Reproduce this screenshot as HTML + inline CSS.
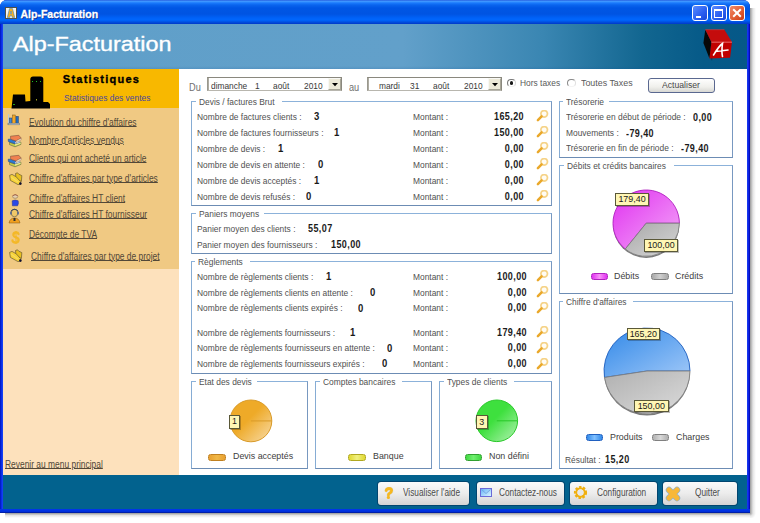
<!DOCTYPE html><html><head><meta charset="utf-8"><style>
*{margin:0;padding:0}
html,body{width:760px;height:523px;overflow:hidden;background:#fff;position:relative}
.a{position:absolute}
.t{position:absolute;white-space:nowrap;line-height:1;font-family:"Liberation Sans",sans-serif}
</style></head><body>
<div class="a" style="left:750px;top:8px;width:6px;height:505px;background:linear-gradient(to right,rgba(0,0,0,.4),rgba(0,0,0,.1) 50%,rgba(0,0,0,0));"></div>
<div class="a" style="left:5px;top:513px;width:745px;height:5px;background:linear-gradient(to bottom,rgba(0,0,0,.4),rgba(0,0,0,.1) 50%,rgba(0,0,0,0));"></div>
<div class="a" style="left:750px;top:513px;width:6px;height:5px;background:radial-gradient(circle at 0 0,rgba(0,0,0,.4),rgba(0,0,0,.1) 3px,rgba(0,0,0,0) 6px);"></div>
<div class="a" style="left:0px;top:0px;width:750px;height:513px;background:#0831d9;border-radius:7px 7px 0 0;box-shadow:inset -1px -1px 0 #001ea0, inset 1px 0 0 #0040e0;"></div>
<div class="a" style="left:3px;top:24px;width:744px;height:485px;background:#fff;"></div>
<div class="a" style="left:0px;top:0px;width:750px;height:24px;border-radius:7px 7px 0 0;background:linear-gradient(to bottom,#2a62e0 0px,#3d95ff 1.5px,#1a7afc 3px,#0a64ee 5px,#0056e4 8px,#0054e2 14px,#0062f8 18px,#0066fc 20px,#0050e0 22px,#0038c8 24px);"></div>
<div class="a" style="left:0px;top:24px;width:3px;height:489px;background:linear-gradient(to right,#0014b8,#0a2ee8 50%,#1848f8);"></div>
<div class="a" style="left:747px;top:24px;width:3px;height:489px;background:linear-gradient(to right,#1a3cf4,#0a1ee0 60%,#0000a0);"></div>
<div class="a" style="left:0px;top:509px;width:750px;height:4px;background:linear-gradient(to bottom,#0038e8,#0030e0 60%,#001890);"></div>
<div class="a" style="left:5.2px;top:6.8px;width:12px;height:12px;background:#f8f4ec;border:1px solid #50504a;box-sizing:border-box"></div>
<svg class="a" style="left:5.2px;top:6.8px" width="12" height="12" viewBox="0 0 12 12"><path d="M2.3,10.6 L4.5,1.6 L7.5,1.6 L9.7,10.6 L7.3,10.6 L6.9,8.7 L5.1,8.7 L4.7,10.6 Z M5.4,6.9 L6.6,6.9 L6,4 Z" fill="#f8b020" fill-rule="evenodd" stroke="#3a80c0" stroke-width=".6"/></svg>
<div class="t" style="left:20.50px;top:8.81px;font-size:10.5px;color:#fff;font-weight:bold;text-shadow:1px 1px 0 #0a2a90;-webkit-text-stroke:0.3px #fff;">Alp-Facturation</div>
<div class="a" style="left:691.5px;top:5px;width:16px;height:16px;border:1px solid #fff;border-radius:3px;box-sizing:border-box;background:linear-gradient(135deg,#5a8cff,#2a5ef0 60%,#1a48d8)"></div>
<div class="a" style="left:710.5px;top:5px;width:16px;height:16px;border:1px solid #fff;border-radius:3px;box-sizing:border-box;background:linear-gradient(135deg,#5a8cff,#2a5ef0 60%,#1a48d8)"></div>
<div class="a" style="left:729px;top:5px;width:16px;height:16px;border:1px solid #fff;border-radius:3px;box-sizing:border-box;background:linear-gradient(135deg,#f08a6a,#e05a30 60%,#c83c18)"></div>
<div class="a" style="left:695.5px;top:15.5px;width:5.5px;height:2.1999999999999993px;background:#fff;"></div>
<div class="a" style="left:713.7px;top:9.2px;width:9.3px;height:8.8px;border:1px solid #fff;border-top-width:2px;box-sizing:border-box"></div>
<svg class="a" style="left:729px;top:5px" width="16" height="16"><path d="M4.2 4.2 L11.8 11.8 M11.8 4.2 L4.2 11.8" stroke="#fff" stroke-width="2"/></svg>
<div class="a" style="left:3px;top:24px;width:744px;height:45px;background:linear-gradient(to right,#5f9fc9 0px,#62a0ca 400px,#3a86b2 540px,#126690 640px,#065a88 700px,#055888 747px);"></div>
<div class="a" style="left:3px;top:66px;width:744px;height:3px;background:linear-gradient(to bottom,rgba(0,60,140,0),rgba(0,60,140,.12));"></div>
<div class="t" style="left:13.30px;transform:scaleX(1.135);transform-origin:0 0;top:33.86px;font-size:20.6px;color:#fff;-webkit-text-stroke:0.35px #fff;">Alp-Facturation</div>
<svg class="a" style="left:700px;top:26px" width="40" height="38" viewBox="700 26 40 38">
<polygon points="706.5,31 712.3,43.5 710.5,59.5 705,45" fill="#000" transform="translate(1.5,1.5)" opacity=".35"/>
<polygon points="705.3,29.7 711.4,42 709.5,58.4 703.4,43.1" fill="#080808"/>
<polygon points="705.3,29.7 724.4,29.7 732,42 711.4,42" fill="#c40c0c"/>
<polygon points="711.4,42 732,42 730.1,57.7 709.5,58.4" fill="#c00000"/>
<path d="M705.3,29.7 L724.4,29.7" fill="none" stroke="#e04040" stroke-width=".6"/><path d="M711.4,42.2 L732,42.2" stroke="#f08080" stroke-width=".8"/>
<path d="M713.5,55 C716,51 719,46 722.5,43.5 C722,47 721.5,52 722.5,56.5 M715.5,51.5 L728,50" stroke="#fff" stroke-width="1.6" fill="none" stroke-linecap="round"/>
</svg>
<div class="a" style="left:3px;top:69px;width:176px;height:39px;background:#f8b800;"></div>
<div class="a" style="left:3px;top:108px;width:176px;height:161px;background:#f0c983;"></div>
<div class="a" style="left:3px;top:269px;width:176px;height:206px;background:#fde1bc;"></div>
<svg class="a" style="left:10px;top:75px" width="42" height="34" viewBox="10 75 42 34">
<path d="M13,94.5 L25,94.5 L25.5,101.5 L30.3,101 L30.3,79 Q30.5,76.4 33,76.4 L40.5,76.4 Q43.3,76.4 43.3,79 L43.3,102 L48,102 L50,104 L50,108.5 L11.5,108.5 Z" fill="#000"/>
<rect x="32" y="81" width="1" height="1" fill="#20c020"/><rect x="36" y="81" width="1" height="1" fill="#20c020"/><rect x="40" y="81" width="1" height="1" fill="#20c020"/>
<rect x="13" y="104" width="2" height="1" fill="#20a020"/><rect x="36" y="99" width="1" height="1.5" fill="#a0a020"/>
</svg>
<div class="t" style="left:62.80px;top:74.49px;font-size:11px;color:#000;font-weight:bold;letter-spacing:1.25px;-webkit-text-stroke:0.35px #000;">Statistiques</div>
<div class="t" style="left:64.00px;transform:scaleX(0.933);transform-origin:0 0;top:93.88px;font-size:9.0px;color:#4a46a0;">Statistiques des ventes</div>
<div class="t" style="left:29.10px;transform:scaleX(0.842);transform-origin:0 0;top:118.23px;font-size:10.0px;color:#524838;text-decoration:underline;text-underline-offset:0.3px;">Evolution du chiffre d&#x27;affaires</div>
<div class="t" style="left:29.10px;transform:scaleX(0.842);transform-origin:0 0;top:135.53px;font-size:10.0px;color:#524838;text-decoration:underline;text-underline-offset:0.3px;">Nombre d&#x27;articles vendus</div>
<div class="t" style="left:29.10px;transform:scaleX(0.842);transform-origin:0 0;top:154.03px;font-size:10.0px;color:#524838;text-decoration:underline;text-underline-offset:0.3px;">Clients qui ont acheté un article</div>
<div class="t" style="left:29.10px;transform:scaleX(0.842);transform-origin:0 0;top:174.03px;font-size:10.0px;color:#524838;text-decoration:underline;text-underline-offset:0.3px;">Chiffre d&#x27;affaires par type d&#x27;articles</div>
<div class="t" style="left:29.10px;transform:scaleX(0.842);transform-origin:0 0;top:194.03px;font-size:10.0px;color:#524838;text-decoration:underline;text-underline-offset:0.3px;">Chiffre d&#x27;affaires HT client</div>
<div class="t" style="left:29.10px;transform:scaleX(0.842);transform-origin:0 0;top:209.73px;font-size:10.0px;color:#524838;text-decoration:underline;text-underline-offset:0.3px;">Chiffre d&#x27;affaires HT fournisseur</div>
<div class="t" style="left:29.10px;transform:scaleX(0.842);transform-origin:0 0;top:229.63px;font-size:10.0px;color:#524838;text-decoration:underline;text-underline-offset:0.3px;">Décompte de TVA</div>
<div class="t" style="left:30.80px;transform:scaleX(0.842);transform-origin:0 0;top:252.03px;font-size:10.0px;color:#524838;text-decoration:underline;text-underline-offset:0.3px;">Chiffre d&#x27;affaires par type de projet</div>
<div class="t" style="left:5.30px;transform:scaleX(0.842);transform-origin:0 0;top:460.34px;font-size:10.0px;color:#524838;text-decoration:underline;text-underline-offset:0.3px;">Revenir au menu principal</div>
<svg class="a" style="left:6px;top:112px" width="16" height="15" viewBox="6 112 16 15">
<rect x="8" y="114.2" width="1.2" height="10" fill="#b8c8d8"/>
<rect x="9.4" y="118" width="2.4" height="5.4" fill="#3a88d8" stroke="#283868" stroke-width=".5"/>
<rect x="12.7" y="115" width="2.5" height="8.4" fill="#f8a820" stroke="#705018" stroke-width=".5"/>
<rect x="16" y="116.4" width="2.4" height="7" fill="#2070c0" stroke="#283868" stroke-width=".5"/>
<rect x="8" y="123.2" width="11.6" height="1.6" fill="#eef6fa" stroke="#485058" stroke-width=".5"/>
</svg>
<svg class="a" style="left:6px;top:132px" width="18" height="17" viewBox="6 132 18 17">
<polygon points="9.5,142.3 15,144 20.9,142.2 20.9,144.4 15,146.8 9.5,144.6" fill="#c8d048" stroke="#586848" stroke-width=".6"/>
<polygon points="15,144.2 20.6,142.4 20.6,143.8 15,145.8" fill="#f0e890"/>
<polygon points="8.2,139.2 10.7,139.3 16,141 16.2,142.5 15,143.8 8.4,141.6" fill="#2a7ad8" stroke="#284880" stroke-width=".6"/>
<polygon points="15,142 19.8,140.8 19.8,142.4 15,143.8" fill="#e0ecff" stroke="#5070a0" stroke-width=".4"/>
<polygon points="10.5,136.2 18.8,135.3 21.2,138.2 16,141 10.7,139.3" fill="#f08050" stroke="#785040" stroke-width=".6"/>
<polygon points="16,141 21.2,138.2 21.2,139.9 16.2,142.6" fill="#f8e4c8" stroke="#906850" stroke-width=".4"/>
</svg>
<svg class="a" style="left:6px;top:152.3px" width="18" height="17" viewBox="6 132 18 17">
<polygon points="9.5,142.3 15,144 20.9,142.2 20.9,144.4 15,146.8 9.5,144.6" fill="#c8d048" stroke="#586848" stroke-width=".6"/>
<polygon points="15,144.2 20.6,142.4 20.6,143.8 15,145.8" fill="#f0e890"/>
<polygon points="8.2,139.2 10.7,139.3 16,141 16.2,142.5 15,143.8 8.4,141.6" fill="#2a7ad8" stroke="#284880" stroke-width=".6"/>
<polygon points="15,142 19.8,140.8 19.8,142.4 15,143.8" fill="#e0ecff" stroke="#5070a0" stroke-width=".4"/>
<polygon points="10.5,136.2 18.8,135.3 21.2,138.2 16,141 10.7,139.3" fill="#f08050" stroke="#785040" stroke-width=".6"/>
<polygon points="16,141 21.2,138.2 21.2,139.9 16.2,142.6" fill="#f8e4c8" stroke="#906850" stroke-width=".4"/>
</svg>
<svg class="a" style="left:8.6px;top:172.3px" width="14" height="14" viewBox="0 0 14 14">
<path d="M6.5,1.5 L8.5,0.8 L9.8,2.2 L12.8,3.6 L12.4,9.5 L7,6.5 Z" fill="#e8c020" stroke="#6a5a30" stroke-width=".7"/>
<path d="M0.6,3.4 L3,2.4 L7.2,4.8 L11.6,9.6 L11,12.2 L9,12.6 L1.4,8.4 Z" fill="#f6d238" stroke="#6a5a30" stroke-width=".7"/>
<path d="M2,5 L9,10" stroke="#f8e070" stroke-width="1.2" opacity=".7"/>
<circle cx="11.4" cy="11.6" r="1.3" fill="#101030"/>
</svg>
<svg class="a" style="left:8.6px;top:249.3px" width="14" height="14" viewBox="0 0 14 14">
<path d="M6.5,1.5 L8.5,0.8 L9.8,2.2 L12.8,3.6 L12.4,9.5 L7,6.5 Z" fill="#e8c020" stroke="#6a5a30" stroke-width=".7"/>
<path d="M0.6,3.4 L3,2.4 L7.2,4.8 L11.6,9.6 L11,12.2 L9,12.6 L1.4,8.4 Z" fill="#f6d238" stroke="#6a5a30" stroke-width=".7"/>
<path d="M2,5 L9,10" stroke="#f8e070" stroke-width="1.2" opacity=".7"/>
<circle cx="11.4" cy="11.6" r="1.3" fill="#101030"/>
</svg>
<svg class="a" style="left:10px;top:193px" width="10" height="14" viewBox="0 0 10 14">
<ellipse cx="5.2" cy="3.6" rx="2.6" ry="1.7" fill="#e8d0b0" stroke="#706050" stroke-width=".5"/>
<path d="M2.4,3 Q5.2,0.8 8,3 L7.6,2.2 Q5.2,0.6 2.8,2.2 Z" fill="#902828"/>
<path d="M2.4,12.8 L2.2,7.8 Q5.2,6.2 8.2,7.8 L8.4,10.5 L7.6,12.8 Z" fill="#2a48e8" stroke="#202890" stroke-width=".5"/>
</svg>
<svg class="a" style="left:8px;top:208px" width="13" height="16" viewBox="0 0 13 16">
<ellipse cx="6.5" cy="5" rx="3.3" ry="3.8" fill="#f0c868" stroke="#505040" stroke-width=".6"/>
<path d="M3,3.5 Q6.5,0 10,3.5 L10,2.5 Q6.5,-1 3,2.5 Z" fill="#304060"/>
<rect x="2.3" y="3.5" width="1.2" height="3" fill="#3050a0"/><rect x="9.5" y="3.5" width="1.2" height="3" fill="#3050a0"/>
<path d="M1,15 Q2,10 6.5,10 Q11,10 12,15 Z" fill="#f0a020" stroke="#805010" stroke-width=".5"/>
<rect x="5.5" y="10" width="2" height="3" fill="#303030"/>
</svg>
<svg class="a" style="left:9.5px;top:229.5px" width="12" height="15" viewBox="0 0 12 15">
<path d="M8.5,4 Q8,2.2 5.5,2.5 Q3,3 3.5,5.5 Q4,7 6.5,7.5 Q9,8.5 8.5,10.5 Q8,12.8 5,12.5 Q2.5,12 2.5,10.5" fill="none" stroke="#f4b828" stroke-width="2.3" stroke-linecap="round"/>
<path d="M6,1 L6,14" stroke="#f4b828" stroke-width="1.1"/>
</svg>
<div class="t" style="left:189.00px;transform:scaleX(0.92);transform-origin:0 0;top:82.73px;font-size:10px;color:#707070;">Du</div>
<div class="a" style="left:207px;top:77px;width:135px;height:14px;background:#fff;border:1px solid;border-color:#8a887e #8a887e #b8b6ae #9a988e;box-sizing:border-box;box-shadow:inset 1px 0 0 #aeaca2;"></div>
<div class="a" style="left:328px;top:78px;width:13px;height:12px;background:#ece9d8;border:1px solid;border-color:#f8f8f4 #a8a698 #a8a698 #f8f8f4;box-sizing:border-box;"></div>
<svg class="a" style="left:331.5px;top:83px" width="6" height="3.5"><path d="M0,0 L6,0 L3,3.2 Z" fill="#000"/></svg>
<div class="t" style="left:210.80px;transform:scaleX(0.87);transform-origin:0 0;top:81.27px;font-size:9.6px;color:#383838;">dimanche</div>
<div class="t" style="left:254.50px;transform:scaleX(0.87);transform-origin:0 0;top:81.27px;font-size:9.6px;color:#383838;">1</div>
<div class="t" style="left:273.00px;transform:scaleX(0.87);transform-origin:0 0;top:81.27px;font-size:9.6px;color:#383838;">août</div>
<div class="t" style="left:303.80px;transform:scaleX(0.87);transform-origin:0 0;top:81.27px;font-size:9.6px;color:#383838;">2010</div>
<div class="t" style="left:349.00px;transform:scaleX(0.92);transform-origin:0 0;top:82.73px;font-size:10px;color:#707070;">au</div>
<div class="a" style="left:367px;top:77px;width:135px;height:14px;background:#fff;border:1px solid;border-color:#8a887e #8a887e #b8b6ae #9a988e;box-sizing:border-box;box-shadow:inset 1px 0 0 #aeaca2;"></div>
<div class="a" style="left:488px;top:78px;width:13px;height:12px;background:#ece9d8;border:1px solid;border-color:#f8f8f4 #a8a698 #a8a698 #f8f8f4;box-sizing:border-box;"></div>
<svg class="a" style="left:491.5px;top:83px" width="6" height="3.5"><path d="M0,0 L6,0 L3,3.2 Z" fill="#000"/></svg>
<div class="t" style="left:378.60px;transform:scaleX(0.87);transform-origin:0 0;top:81.27px;font-size:9.6px;color:#383838;">mardi</div>
<div class="t" style="left:410.00px;transform:scaleX(0.87);transform-origin:0 0;top:81.27px;font-size:9.6px;color:#383838;">31</div>
<div class="t" style="left:433.00px;transform:scaleX(0.87);transform-origin:0 0;top:81.27px;font-size:9.6px;color:#383838;">août</div>
<div class="t" style="left:463.70px;transform:scaleX(0.87);transform-origin:0 0;top:81.27px;font-size:9.6px;color:#383838;">2010</div>
<div class="a" style="left:507px;top:78.8px;width:8.6px;height:8.6px;border-radius:50%;border:1px solid;border-color:#7a7a7a #d8d8d8 #f0f0f0 #7a7a7a;box-sizing:border-box;background:#fff"></div>
<div class="a" style="left:509.6px;top:81.4px;width:3.4px;height:3.4px;border-radius:50%;background:#181818"></div>
<div class="a" style="left:567px;top:78.8px;width:8.6px;height:8.6px;border-radius:50%;border:1px solid;border-color:#8a8a8a #e0e0e0 #f4f4f4 #8a8a8a;box-sizing:border-box;background:#fff"></div>
<div class="t" style="left:520.30px;transform:scaleX(0.933);transform-origin:0 0;top:79.08px;font-size:9.0px;color:#5a5a5a;">Hors taxes</div>
<div class="t" style="left:581.00px;transform:scaleX(0.985);transform-origin:0 0;top:79.08px;font-size:9.0px;color:#5a5a5a;">Toutes Taxes</div>
<div class="a" style="left:648px;top:78px;width:67px;height:15px;border:1px solid #5a6890;border-radius:3px;box-sizing:border-box;background:linear-gradient(#fefefe,#f0f0ec 60%,#d8d8d4)"></div>
<div class="t" style="left:662.00px;transform:scaleX(0.9);transform-origin:0 0;top:80.47px;font-size:9.6px;color:#484848;">Actualiser</div>
<div class="a" style="left:191px;top:101px;width:361px;height:105px;border:1px solid;border-color:#8cb2da #7898c0 #6c8cb4 #86acd4;box-sizing:border-box;"></div>
<div class="a" style="left:195.7px;top:101px;width:86.30000000000001px;height:1px;background:#fff;"></div>
<div class="t" style="left:198.70px;transform:scaleX(0.933);transform-origin:0 0;top:98.28px;font-size:9.0px;color:#505050;">Devis / factures Brut</div>
<div class="t" style="left:197.40px;transform:scaleX(0.933);transform-origin:0 0;top:112.68px;font-size:9.0px;color:#505050;">Nombre de factures clients :</div>
<div class="t" style="left:314.00px;transform:scaleX(0.95);transform-origin:0 0;top:111.83px;font-size:10.0px;color:#1a1a1a;font-weight:bold;letter-spacing:0.2px;">3</div>
<div class="t" style="left:413.00px;transform:scaleX(0.933);transform-origin:0 0;top:112.68px;font-size:9.0px;color:#505050;">Montant :</div>
<div class="t" style="left:324.40px;width:200px;text-align:right;transform:scaleX(0.9);transform-origin:100% 0;top:111.63px;font-size:10.0px;color:#1a1a1a;font-weight:bold;letter-spacing:0.45px;">165,20</div>
<svg class="a" style="left:535.5px;top:110.3px" width="13" height="12" viewBox="0 0 13 12">
<circle cx="8.2" cy="3.8" r="3.3" fill="#fffcf4" stroke="#f8dc9c" stroke-width="1.8"/>
<circle cx="8.2" cy="3.8" r="3.3" fill="none" stroke="#f0c060" stroke-width=".6" opacity=".7"/>
<path d="M5.6,6.4 L1.9,10.1" stroke="#eaa82a" stroke-width="2.5" stroke-linecap="round"/>
</svg>
<div class="t" style="left:197.40px;transform:scaleX(0.933);transform-origin:0 0;top:128.68px;font-size:9.0px;color:#505050;">Nombre de factures fournisseurs :</div>
<div class="t" style="left:334.00px;transform:scaleX(0.95);transform-origin:0 0;top:127.84px;font-size:10.0px;color:#1a1a1a;font-weight:bold;letter-spacing:0.2px;">1</div>
<div class="t" style="left:413.00px;transform:scaleX(0.933);transform-origin:0 0;top:128.68px;font-size:9.0px;color:#505050;">Montant :</div>
<div class="t" style="left:324.40px;width:200px;text-align:right;transform:scaleX(0.9);transform-origin:100% 0;top:127.64px;font-size:10.0px;color:#1a1a1a;font-weight:bold;letter-spacing:0.45px;">150,00</div>
<svg class="a" style="left:535.5px;top:126.30000000000001px" width="13" height="12" viewBox="0 0 13 12">
<circle cx="8.2" cy="3.8" r="3.3" fill="#fffcf4" stroke="#f8dc9c" stroke-width="1.8"/>
<circle cx="8.2" cy="3.8" r="3.3" fill="none" stroke="#f0c060" stroke-width=".6" opacity=".7"/>
<path d="M5.6,6.4 L1.9,10.1" stroke="#eaa82a" stroke-width="2.5" stroke-linecap="round"/>
</svg>
<div class="t" style="left:197.40px;transform:scaleX(0.933);transform-origin:0 0;top:144.68px;font-size:9.0px;color:#505050;">Nombre de devis :</div>
<div class="t" style="left:278.00px;transform:scaleX(0.95);transform-origin:0 0;top:143.84px;font-size:10.0px;color:#1a1a1a;font-weight:bold;letter-spacing:0.2px;">1</div>
<div class="t" style="left:413.00px;transform:scaleX(0.933);transform-origin:0 0;top:144.68px;font-size:9.0px;color:#505050;">Montant :</div>
<div class="t" style="left:324.40px;width:200px;text-align:right;transform:scaleX(0.9);transform-origin:100% 0;top:143.64px;font-size:10.0px;color:#1a1a1a;font-weight:bold;letter-spacing:0.45px;">0,00</div>
<svg class="a" style="left:535.5px;top:142.3px" width="13" height="12" viewBox="0 0 13 12">
<circle cx="8.2" cy="3.8" r="3.3" fill="#fffcf4" stroke="#f8dc9c" stroke-width="1.8"/>
<circle cx="8.2" cy="3.8" r="3.3" fill="none" stroke="#f0c060" stroke-width=".6" opacity=".7"/>
<path d="M5.6,6.4 L1.9,10.1" stroke="#eaa82a" stroke-width="2.5" stroke-linecap="round"/>
</svg>
<div class="t" style="left:197.40px;transform:scaleX(0.933);transform-origin:0 0;top:160.68px;font-size:9.0px;color:#505050;">Nombre de devis en attente :</div>
<div class="t" style="left:318.00px;transform:scaleX(0.95);transform-origin:0 0;top:159.84px;font-size:10.0px;color:#1a1a1a;font-weight:bold;letter-spacing:0.2px;">0</div>
<div class="t" style="left:413.00px;transform:scaleX(0.933);transform-origin:0 0;top:160.68px;font-size:9.0px;color:#505050;">Montant :</div>
<div class="t" style="left:324.40px;width:200px;text-align:right;transform:scaleX(0.9);transform-origin:100% 0;top:159.64px;font-size:10.0px;color:#1a1a1a;font-weight:bold;letter-spacing:0.45px;">0,00</div>
<svg class="a" style="left:535.5px;top:158.3px" width="13" height="12" viewBox="0 0 13 12">
<circle cx="8.2" cy="3.8" r="3.3" fill="#fffcf4" stroke="#f8dc9c" stroke-width="1.8"/>
<circle cx="8.2" cy="3.8" r="3.3" fill="none" stroke="#f0c060" stroke-width=".6" opacity=".7"/>
<path d="M5.6,6.4 L1.9,10.1" stroke="#eaa82a" stroke-width="2.5" stroke-linecap="round"/>
</svg>
<div class="t" style="left:197.40px;transform:scaleX(0.933);transform-origin:0 0;top:176.68px;font-size:9.0px;color:#505050;">Nombre de devis acceptés :</div>
<div class="t" style="left:314.00px;transform:scaleX(0.95);transform-origin:0 0;top:175.84px;font-size:10.0px;color:#1a1a1a;font-weight:bold;letter-spacing:0.2px;">1</div>
<div class="t" style="left:413.00px;transform:scaleX(0.933);transform-origin:0 0;top:176.68px;font-size:9.0px;color:#505050;">Montant :</div>
<div class="t" style="left:324.40px;width:200px;text-align:right;transform:scaleX(0.9);transform-origin:100% 0;top:175.64px;font-size:10.0px;color:#1a1a1a;font-weight:bold;letter-spacing:0.45px;">0,00</div>
<svg class="a" style="left:535.5px;top:174.3px" width="13" height="12" viewBox="0 0 13 12">
<circle cx="8.2" cy="3.8" r="3.3" fill="#fffcf4" stroke="#f8dc9c" stroke-width="1.8"/>
<circle cx="8.2" cy="3.8" r="3.3" fill="none" stroke="#f0c060" stroke-width=".6" opacity=".7"/>
<path d="M5.6,6.4 L1.9,10.1" stroke="#eaa82a" stroke-width="2.5" stroke-linecap="round"/>
</svg>
<div class="t" style="left:197.40px;transform:scaleX(0.933);transform-origin:0 0;top:192.68px;font-size:9.0px;color:#505050;">Nombre de devis refusés :</div>
<div class="t" style="left:306.40px;transform:scaleX(0.95);transform-origin:0 0;top:191.84px;font-size:10.0px;color:#1a1a1a;font-weight:bold;letter-spacing:0.2px;">0</div>
<div class="t" style="left:413.00px;transform:scaleX(0.933);transform-origin:0 0;top:192.68px;font-size:9.0px;color:#505050;">Montant :</div>
<div class="t" style="left:324.40px;width:200px;text-align:right;transform:scaleX(0.9);transform-origin:100% 0;top:191.64px;font-size:10.0px;color:#1a1a1a;font-weight:bold;letter-spacing:0.45px;">0,00</div>
<svg class="a" style="left:535.5px;top:190.3px" width="13" height="12" viewBox="0 0 13 12">
<circle cx="8.2" cy="3.8" r="3.3" fill="#fffcf4" stroke="#f8dc9c" stroke-width="1.8"/>
<circle cx="8.2" cy="3.8" r="3.3" fill="none" stroke="#f0c060" stroke-width=".6" opacity=".7"/>
<path d="M5.6,6.4 L1.9,10.1" stroke="#eaa82a" stroke-width="2.5" stroke-linecap="round"/>
</svg>
<div class="a" style="left:191px;top:213px;width:361px;height:41px;border:1px solid;border-color:#8cb2da #7898c0 #6c8cb4 #86acd4;box-sizing:border-box;"></div>
<div class="a" style="left:195.7px;top:213px;width:68.30000000000001px;height:1px;background:#fff;"></div>
<div class="t" style="left:198.70px;transform:scaleX(0.933);transform-origin:0 0;top:210.28px;font-size:9.0px;color:#505050;">Paniers moyens</div>
<div class="t" style="left:197.40px;transform:scaleX(0.933);transform-origin:0 0;top:224.88px;font-size:9.0px;color:#505050;">Panier moyen des clients :</div>
<div class="t" style="left:307.50px;transform:scaleX(0.9);transform-origin:0 0;top:224.34px;font-size:10.0px;color:#1a1a1a;font-weight:bold;letter-spacing:0.45px;">55,07</div>
<div class="t" style="left:197.40px;transform:scaleX(0.933);transform-origin:0 0;top:240.88px;font-size:9.0px;color:#505050;">Panier moyen des fournisseurs :</div>
<div class="t" style="left:331.00px;transform:scaleX(0.9);transform-origin:0 0;top:240.34px;font-size:10.0px;color:#1a1a1a;font-weight:bold;letter-spacing:0.45px;">150,00</div>
<div class="a" style="left:191px;top:261px;width:361px;height:113px;border:1px solid;border-color:#8cb2da #7898c0 #6c8cb4 #86acd4;box-sizing:border-box;"></div>
<div class="a" style="left:195.3px;top:261px;width:54.39999999999998px;height:1px;background:#fff;"></div>
<div class="t" style="left:198.30px;transform:scaleX(0.933);transform-origin:0 0;top:258.28px;font-size:9.0px;color:#505050;">Règlements</div>
<div class="t" style="left:197.40px;transform:scaleX(0.933);transform-origin:0 0;top:272.78px;font-size:9.0px;color:#505050;">Nombre de règlements clients :</div>
<div class="t" style="left:326.00px;transform:scaleX(0.95);transform-origin:0 0;top:271.94px;font-size:10.0px;color:#1a1a1a;font-weight:bold;letter-spacing:0.2px;">1</div>
<div class="t" style="left:413.00px;transform:scaleX(0.933);transform-origin:0 0;top:272.78px;font-size:9.0px;color:#505050;">Montant :</div>
<div class="t" style="left:326.70px;width:200px;text-align:right;transform:scaleX(0.9);transform-origin:100% 0;top:271.74px;font-size:10.0px;color:#1a1a1a;font-weight:bold;letter-spacing:0.45px;">100,00</div>
<svg class="a" style="left:535.5px;top:270.4px" width="13" height="12" viewBox="0 0 13 12">
<circle cx="8.2" cy="3.8" r="3.3" fill="#fffcf4" stroke="#f8dc9c" stroke-width="1.8"/>
<circle cx="8.2" cy="3.8" r="3.3" fill="none" stroke="#f0c060" stroke-width=".6" opacity=".7"/>
<path d="M5.6,6.4 L1.9,10.1" stroke="#eaa82a" stroke-width="2.5" stroke-linecap="round"/>
</svg>
<div class="t" style="left:197.40px;transform:scaleX(0.933);transform-origin:0 0;top:288.58px;font-size:9.0px;color:#505050;">Nombre de règlements clients en attente :</div>
<div class="t" style="left:369.70px;transform:scaleX(0.95);transform-origin:0 0;top:287.74px;font-size:10.0px;color:#1a1a1a;font-weight:bold;letter-spacing:0.2px;">0</div>
<div class="t" style="left:413.00px;transform:scaleX(0.933);transform-origin:0 0;top:288.58px;font-size:9.0px;color:#505050;">Montant :</div>
<div class="t" style="left:326.70px;width:200px;text-align:right;transform:scaleX(0.9);transform-origin:100% 0;top:287.54px;font-size:10.0px;color:#1a1a1a;font-weight:bold;letter-spacing:0.45px;">0,00</div>
<svg class="a" style="left:535.5px;top:286.2px" width="13" height="12" viewBox="0 0 13 12">
<circle cx="8.2" cy="3.8" r="3.3" fill="#fffcf4" stroke="#f8dc9c" stroke-width="1.8"/>
<circle cx="8.2" cy="3.8" r="3.3" fill="none" stroke="#f0c060" stroke-width=".6" opacity=".7"/>
<path d="M5.6,6.4 L1.9,10.1" stroke="#eaa82a" stroke-width="2.5" stroke-linecap="round"/>
</svg>
<div class="t" style="left:197.40px;transform:scaleX(0.933);transform-origin:0 0;top:304.38px;font-size:9.0px;color:#505050;">Nombre de règlements clients expirés :</div>
<div class="t" style="left:358.00px;transform:scaleX(0.95);transform-origin:0 0;top:303.54px;font-size:10.0px;color:#1a1a1a;font-weight:bold;letter-spacing:0.2px;">0</div>
<div class="t" style="left:413.00px;transform:scaleX(0.933);transform-origin:0 0;top:304.38px;font-size:9.0px;color:#505050;">Montant :</div>
<div class="t" style="left:326.70px;width:200px;text-align:right;transform:scaleX(0.9);transform-origin:100% 0;top:303.34px;font-size:10.0px;color:#1a1a1a;font-weight:bold;letter-spacing:0.45px;">0,00</div>
<svg class="a" style="left:535.5px;top:302px" width="13" height="12" viewBox="0 0 13 12">
<circle cx="8.2" cy="3.8" r="3.3" fill="#fffcf4" stroke="#f8dc9c" stroke-width="1.8"/>
<circle cx="8.2" cy="3.8" r="3.3" fill="none" stroke="#f0c060" stroke-width=".6" opacity=".7"/>
<path d="M5.6,6.4 L1.9,10.1" stroke="#eaa82a" stroke-width="2.5" stroke-linecap="round"/>
</svg>
<div class="t" style="left:197.40px;transform:scaleX(0.933);transform-origin:0 0;top:328.58px;font-size:9.0px;color:#505050;">Nombre de règlements fournisseurs :</div>
<div class="t" style="left:350.00px;transform:scaleX(0.95);transform-origin:0 0;top:327.74px;font-size:10.0px;color:#1a1a1a;font-weight:bold;letter-spacing:0.2px;">1</div>
<div class="t" style="left:413.00px;transform:scaleX(0.933);transform-origin:0 0;top:328.58px;font-size:9.0px;color:#505050;">Montant :</div>
<div class="t" style="left:326.70px;width:200px;text-align:right;transform:scaleX(0.9);transform-origin:100% 0;top:327.54px;font-size:10.0px;color:#1a1a1a;font-weight:bold;letter-spacing:0.45px;">179,40</div>
<svg class="a" style="left:535.5px;top:326.2px" width="13" height="12" viewBox="0 0 13 12">
<circle cx="8.2" cy="3.8" r="3.3" fill="#fffcf4" stroke="#f8dc9c" stroke-width="1.8"/>
<circle cx="8.2" cy="3.8" r="3.3" fill="none" stroke="#f0c060" stroke-width=".6" opacity=".7"/>
<path d="M5.6,6.4 L1.9,10.1" stroke="#eaa82a" stroke-width="2.5" stroke-linecap="round"/>
</svg>
<div class="t" style="left:197.40px;transform:scaleX(0.933);transform-origin:0 0;top:344.38px;font-size:9.0px;color:#505050;">Nombre de règlements fournisseurs en attente :</div>
<div class="t" style="left:387.00px;transform:scaleX(0.95);transform-origin:0 0;top:343.54px;font-size:10.0px;color:#1a1a1a;font-weight:bold;letter-spacing:0.2px;">0</div>
<div class="t" style="left:413.00px;transform:scaleX(0.933);transform-origin:0 0;top:344.38px;font-size:9.0px;color:#505050;">Montant :</div>
<div class="t" style="left:326.70px;width:200px;text-align:right;transform:scaleX(0.9);transform-origin:100% 0;top:343.34px;font-size:10.0px;color:#1a1a1a;font-weight:bold;letter-spacing:0.45px;">0,00</div>
<svg class="a" style="left:535.5px;top:342px" width="13" height="12" viewBox="0 0 13 12">
<circle cx="8.2" cy="3.8" r="3.3" fill="#fffcf4" stroke="#f8dc9c" stroke-width="1.8"/>
<circle cx="8.2" cy="3.8" r="3.3" fill="none" stroke="#f0c060" stroke-width=".6" opacity=".7"/>
<path d="M5.6,6.4 L1.9,10.1" stroke="#eaa82a" stroke-width="2.5" stroke-linecap="round"/>
</svg>
<div class="t" style="left:197.40px;transform:scaleX(0.933);transform-origin:0 0;top:360.18px;font-size:9.0px;color:#505050;">Nombre de règlements fournisseurs expirés :</div>
<div class="t" style="left:381.70px;transform:scaleX(0.95);transform-origin:0 0;top:359.34px;font-size:10.0px;color:#1a1a1a;font-weight:bold;letter-spacing:0.2px;">0</div>
<div class="t" style="left:413.00px;transform:scaleX(0.933);transform-origin:0 0;top:360.18px;font-size:9.0px;color:#505050;">Montant :</div>
<div class="t" style="left:326.70px;width:200px;text-align:right;transform:scaleX(0.9);transform-origin:100% 0;top:359.14px;font-size:10.0px;color:#1a1a1a;font-weight:bold;letter-spacing:0.45px;">0,00</div>
<svg class="a" style="left:535.5px;top:357.8px" width="13" height="12" viewBox="0 0 13 12">
<circle cx="8.2" cy="3.8" r="3.3" fill="#fffcf4" stroke="#f8dc9c" stroke-width="1.8"/>
<circle cx="8.2" cy="3.8" r="3.3" fill="none" stroke="#f0c060" stroke-width=".6" opacity=".7"/>
<path d="M5.6,6.4 L1.9,10.1" stroke="#eaa82a" stroke-width="2.5" stroke-linecap="round"/>
</svg>
<div class="a" style="left:191px;top:381px;width:117px;height:88px;border:1px solid;border-color:#8cb2da #7898c0 #6c8cb4 #86acd4;box-sizing:border-box;"></div>
<div class="a" style="left:195.7px;top:381px;width:61.30000000000001px;height:1px;background:#fff;"></div>
<div class="t" style="left:198.70px;transform:scaleX(0.933);transform-origin:0 0;top:378.28px;font-size:9.0px;color:#505050;">Etat des devis</div>
<div class="a" style="left:315px;top:381px;width:117px;height:88px;border:1px solid;border-color:#8cb2da #7898c0 #6c8cb4 #86acd4;box-sizing:border-box;"></div>
<div class="a" style="left:319.7px;top:381px;width:82.69999999999999px;height:1px;background:#fff;"></div>
<div class="t" style="left:322.70px;transform:scaleX(0.933);transform-origin:0 0;top:378.28px;font-size:9.0px;color:#505050;">Comptes bancaires</div>
<div class="a" style="left:439px;top:381px;width:113px;height:88px;border:1px solid;border-color:#8cb2da #7898c0 #6c8cb4 #86acd4;box-sizing:border-box;"></div>
<div class="a" style="left:444px;top:381px;width:70px;height:1px;background:#fff;"></div>
<div class="t" style="left:447.00px;transform:scaleX(0.933);transform-origin:0 0;top:378.28px;font-size:9.0px;color:#505050;">Types de clients</div>
<svg class="a" style="left:227.5px;top:398.1px" width="45.8" height="45.8" viewBox="227.5 398.1 45.8 45.8">
<defs><linearGradient id="gp1" x1="0" y1="0" x2="1" y2="1"><stop offset="0" stop-color="#eeaa28"/><stop offset=".45" stop-color="#eeaa28"/><stop offset="1" stop-color="#f8dcaa"/></linearGradient></defs>
<circle cx="250.4" cy="421" r="20.9" fill="url(#gp1)" stroke="#d89a28" stroke-width="1"/>
<line x1="250.4" y1="421" x2="271.3" y2="421" stroke="#d89a28" stroke-width="1"/>
</svg>
<div class="a" style="left:229.2px;top:415px;width:11.0px;height:13.600000000000023px;background:#fff6b4;border:1px solid #5a5838;box-sizing:border-box;box-shadow:1px 1px 0 rgba(0,0,0,.25)"></div>
<div class="t" style="left:229.2px;width:11.0px;text-align:center;top:416.36px;font-size:9.9px;color:#1a1a1a;transform:scaleX(0.9)">1</div>
<svg class="a" style="left:474.4px;top:398.09999999999997px" width="45.6" height="45.6" viewBox="474.4 398.09999999999997 45.6 45.6">
<defs><linearGradient id="gp2" x1="0" y1="0" x2="1" y2="1"><stop offset="0" stop-color="#3ee03e"/><stop offset=".45" stop-color="#3ee03e"/><stop offset="1" stop-color="#b4f2b4"/></linearGradient></defs>
<circle cx="497.2" cy="420.9" r="20.8" fill="url(#gp2)" stroke="#28c828" stroke-width="1"/>
<line x1="497.2" y1="420.9" x2="518.0" y2="420.9" stroke="#28c828" stroke-width="1"/>
</svg>
<div class="a" style="left:476.2px;top:415px;width:11.400000000000034px;height:14px;background:#fff6b4;border:1px solid #5a5838;box-sizing:border-box;box-shadow:1px 1px 0 rgba(0,0,0,.25)"></div>
<div class="t" style="left:476.2px;width:11.400000000000034px;text-align:center;top:416.56px;font-size:9.9px;color:#1a1a1a;transform:scaleX(0.9)">3</div>
<div class="a" style="left:208px;top:453.6px;width:17.5px;height:7.4px;border-radius:2.5px;border:1px solid #c08020;box-sizing:border-box;background:linear-gradient(to right,#e8a030,#f0b848 50%,#e8a030)"></div>
<div class="t" style="left:232.80px;transform:scaleX(0.905);transform-origin:0 0;top:451.30px;font-size:9.8px;color:#404040;">Devis acceptés</div>
<div class="a" style="left:348px;top:453.6px;width:17.5px;height:7.4px;border-radius:2.5px;border:1px solid #b0a820;box-sizing:border-box;background:linear-gradient(to right,#e0d830,#f0f080 50%,#e0d830)"></div>
<div class="t" style="left:372.70px;transform:scaleX(0.905);transform-origin:0 0;top:451.30px;font-size:9.8px;color:#404040;">Banque</div>
<div class="a" style="left:464.7px;top:453.6px;width:17.5px;height:7.4px;border-radius:2.5px;border:1px solid #30a030;box-sizing:border-box;background:linear-gradient(to right,#40d840,#70f070 50%,#40d840)"></div>
<div class="t" style="left:489.20px;transform:scaleX(0.905);transform-origin:0 0;top:451.30px;font-size:9.8px;color:#404040;">Non défini</div>
<div class="a" style="left:559px;top:101px;width:174px;height:57px;border:1px solid;border-color:#8cb2da #7898c0 #6c8cb4 #86acd4;box-sizing:border-box;"></div>
<div class="a" style="left:563.3px;top:101px;width:45.40000000000009px;height:1px;background:#fff;"></div>
<div class="t" style="left:566.30px;transform:scaleX(0.933);transform-origin:0 0;top:98.28px;font-size:9.0px;color:#505050;">Trésorerie</div>
<div class="t" style="left:565.60px;transform:scaleX(0.933);transform-origin:0 0;top:112.88px;font-size:9.0px;color:#505050;">Trésorerie en début de période :</div>
<div class="t" style="left:692.50px;transform:scaleX(0.9);transform-origin:0 0;top:112.83px;font-size:10.0px;color:#1a1a1a;font-weight:bold;letter-spacing:0.45px;">0,00</div>
<div class="t" style="left:565.60px;transform:scaleX(0.933);transform-origin:0 0;top:128.68px;font-size:9.0px;color:#505050;">Mouvements :</div>
<div class="t" style="left:626.20px;transform:scaleX(0.9);transform-origin:0 0;top:128.53px;font-size:10.0px;color:#1a1a1a;font-weight:bold;letter-spacing:0.45px;">-79,40</div>
<div class="t" style="left:565.60px;transform:scaleX(0.933);transform-origin:0 0;top:144.38px;font-size:9.0px;color:#505050;">Trésorerie en fin de période :</div>
<div class="t" style="left:681.20px;transform:scaleX(0.9);transform-origin:0 0;top:144.34px;font-size:10.0px;color:#1a1a1a;font-weight:bold;letter-spacing:0.45px;">-79,40</div>
<div class="a" style="left:559px;top:165px;width:174px;height:129px;border:1px solid;border-color:#8cb2da #7898c0 #6c8cb4 #86acd4;box-sizing:border-box;"></div>
<div class="a" style="left:564px;top:165px;width:109.70000000000005px;height:1px;background:#fff;"></div>
<div class="t" style="left:567.00px;transform:scaleX(0.933);transform-origin:0 0;top:162.28px;font-size:9.0px;color:#505050;">Débits et crédits bancaires</div>
<svg class="a" style="left:610.3px;top:186.89999999999998px" width="72.4" height="73.4" viewBox="610.3 186.89999999999998 72.4 73.4"><defs><linearGradient id="pd0" x1="0" y1="0" x2="1" y2="1"><stop offset="0" stop-color="#e030f0"/><stop offset=".5" stop-color="#e030f0" stop-opacity=".0" /><stop offset="1" stop-color="#f4a8f8"/></linearGradient><linearGradient id="pdb0" x1="0" y1="0" x2="1" y2="1"><stop offset="0" stop-color="#e030f0"/><stop offset="1" stop-color="#f4a8f8"/></linearGradient><linearGradient id="pd1" x1="0" y1="0" x2="1" y2="1"><stop offset="0" stop-color="#a8a8a8"/><stop offset=".5" stop-color="#a8a8a8" stop-opacity=".0" /><stop offset="1" stop-color="#d8d8d8"/></linearGradient><linearGradient id="pdb1" x1="0" y1="0" x2="1" y2="1"><stop offset="0" stop-color="#a8a8a8"/><stop offset="1" stop-color="#d8d8d8"/></linearGradient></defs><circle cx="646.5" cy="224.6" r="33.2" fill="#7a7a7a"/><path d="M646.5,223.1 L625.61,248.90 A33.2,33.2 0 1 1 679.70,223.10 Z" fill="url(#pdb0)" stroke="#b020c0" stroke-width=".9"/><path d="M646.5,223.1 L679.70,223.10 A33.2,33.2 0 0 1 625.61,248.90 Z" fill="url(#pdb1)" stroke="#808080" stroke-width=".9"/></svg>
<div class="a" style="left:615.4px;top:192.6px;width:34.0px;height:13.0px;background:#fff6b4;border:1px solid #5a5838;box-sizing:border-box;box-shadow:1px 1px 0 rgba(0,0,0,.25)"></div>
<div class="t" style="left:615.4px;width:34.0px;text-align:center;top:193.66px;font-size:9.9px;color:#1a1a1a;transform:scaleX(0.9)">179,40</div>
<div class="a" style="left:644px;top:239px;width:34px;height:13px;background:#fff6b4;border:1px solid #5a5838;box-sizing:border-box;box-shadow:1px 1px 0 rgba(0,0,0,.25)"></div>
<div class="t" style="left:644px;width:34px;text-align:center;top:240.06px;font-size:9.9px;color:#1a1a1a;transform:scaleX(0.9)">100,00</div>
<div class="a" style="left:590.6px;top:273.0px;width:17.5px;height:7.4px;border-radius:2.5px;border:1px solid #b020c0;box-sizing:border-box;background:linear-gradient(to right,#e030f0,#f890f8 50%,#e030f0)"></div>
<div class="t" style="left:614.40px;transform:scaleX(0.905);transform-origin:0 0;top:270.90px;font-size:9.8px;color:#404040;">Débits</div>
<div class="a" style="left:651.3px;top:273.0px;width:17.5px;height:7.4px;border-radius:2.5px;border:1px solid #808080;box-sizing:border-box;background:linear-gradient(to right,#a8a8a8,#d0d0d0 50%,#a8a8a8)"></div>
<div class="t" style="left:675.40px;transform:scaleX(0.905);transform-origin:0 0;top:270.90px;font-size:9.8px;color:#404040;">Crédits</div>
<div class="a" style="left:559px;top:301px;width:174px;height:168px;border:1px solid;border-color:#8cb2da #7898c0 #6c8cb4 #86acd4;box-sizing:border-box;"></div>
<div class="a" style="left:563.3px;top:301px;width:70.20000000000005px;height:1px;background:#fff;"></div>
<div class="t" style="left:566.30px;transform:scaleX(0.933);transform-origin:0 0;top:298.28px;font-size:9.0px;color:#505050;">Chiffre d&#x27;affaires</div>
<svg class="a" style="left:600.7px;top:325px" width="92" height="93" viewBox="600.7 325 92 93"><defs><linearGradient id="pc0" x1="0" y1="0" x2="1" y2="1"><stop offset="0" stop-color="#3088e8"/><stop offset=".5" stop-color="#3088e8" stop-opacity=".0" /><stop offset="1" stop-color="#a0c8f8"/></linearGradient><linearGradient id="pcb0" x1="0" y1="0" x2="1" y2="1"><stop offset="0" stop-color="#3088e8"/><stop offset="1" stop-color="#a0c8f8"/></linearGradient><linearGradient id="pc1" x1="0" y1="0" x2="1" y2="1"><stop offset="0" stop-color="#b0b0b0"/><stop offset=".5" stop-color="#b0b0b0" stop-opacity=".0" /><stop offset="1" stop-color="#dcdcdc"/></linearGradient><linearGradient id="pcb1" x1="0" y1="0" x2="1" y2="1"><stop offset="0" stop-color="#b0b0b0"/><stop offset="1" stop-color="#dcdcdc"/></linearGradient></defs><circle cx="646.7" cy="372.5" r="43" fill="#7a7a7a"/><path d="M646.7,371 L604.18,377.43 A43,43 0 1 1 689.70,371.00 Z" fill="url(#pcb0)" stroke="#2060c0" stroke-width=".9"/><path d="M646.7,371 L689.70,371.00 A43,43 0 0 1 604.18,377.43 Z" fill="url(#pcb1)" stroke="#808080" stroke-width=".9"/></svg>
<div class="a" style="left:627px;top:327.7px;width:32.5px;height:12.800000000000011px;background:#fff6b4;border:1px solid #5a5838;box-sizing:border-box;box-shadow:1px 1px 0 rgba(0,0,0,.25)"></div>
<div class="t" style="left:627px;width:32.5px;text-align:center;top:328.66px;font-size:9.9px;color:#1a1a1a;transform:scaleX(0.9)">165,20</div>
<div class="a" style="left:634px;top:400px;width:34.5px;height:12.300000000000011px;background:#fff6b4;border:1px solid #5a5838;box-sizing:border-box;box-shadow:1px 1px 0 rgba(0,0,0,.25)"></div>
<div class="t" style="left:634px;width:34.5px;text-align:center;top:400.70px;font-size:9.9px;color:#1a1a1a;transform:scaleX(0.9)">150,00</div>
<div class="a" style="left:585.8px;top:433.90000000000003px;width:17.5px;height:7.4px;border-radius:2.5px;border:1px solid #2060c0;box-sizing:border-box;background:linear-gradient(to right,#3088e8,#80c0ff 50%,#3088e8)"></div>
<div class="t" style="left:609.80px;transform:scaleX(0.905);transform-origin:0 0;top:432.10px;font-size:9.8px;color:#404040;">Produits</div>
<div class="a" style="left:651.6px;top:433.90000000000003px;width:17.5px;height:7.4px;border-radius:2.5px;border:1px solid #808080;box-sizing:border-box;background:linear-gradient(to right,#b0b0b0,#d8d8d8 50%,#b0b0b0)"></div>
<div class="t" style="left:676.00px;transform:scaleX(0.905);transform-origin:0 0;top:432.10px;font-size:9.8px;color:#404040;">Charges</div>
<div class="t" style="left:565.00px;transform:scaleX(0.933);transform-origin:0 0;top:455.88px;font-size:9.0px;color:#505050;">Résultat :</div>
<div class="t" style="left:605.20px;transform:scaleX(0.9);transform-origin:0 0;top:455.14px;font-size:10.0px;color:#1a1a1a;font-weight:bold;letter-spacing:0.45px;">15,20</div>
<div class="a" style="left:3px;top:475px;width:744px;height:34px;background:#02628e;"></div>
<div class="a" style="left:378.2px;top:481.5px;width:90.5px;height:23.3px;border-radius:3px;background:linear-gradient(#fafafa,#ececec 50%,#d4d4d4);box-shadow:0 0 0 1px rgba(0,40,80,.5)"></div>
<div class="t" style="left:403.30px;transform:scaleX(0.812);transform-origin:0 0;top:487.57px;font-size:10.2px;color:#4a4a4a;">Visualiser l&#x27;aide</div>
<div class="a" style="left:476.5px;top:481.5px;width:87.89999999999998px;height:23.3px;border-radius:3px;background:linear-gradient(#fafafa,#ececec 50%,#d4d4d4);box-shadow:0 0 0 1px rgba(0,40,80,.5)"></div>
<div class="t" style="left:498.70px;transform:scaleX(0.812);transform-origin:0 0;top:487.57px;font-size:10.2px;color:#4a4a4a;">Contactez-nous</div>
<div class="a" style="left:570.4px;top:481.5px;width:86.5px;height:23.3px;border-radius:3px;background:linear-gradient(#fafafa,#ececec 50%,#d4d4d4);box-shadow:0 0 0 1px rgba(0,40,80,.5)"></div>
<div class="t" style="left:596.80px;transform:scaleX(0.812);transform-origin:0 0;top:487.57px;font-size:10.2px;color:#4a4a4a;">Configuration</div>
<div class="a" style="left:663px;top:481.5px;width:74.20000000000005px;height:23.3px;border-radius:3px;background:linear-gradient(#fafafa,#ececec 50%,#d4d4d4);box-shadow:0 0 0 1px rgba(0,40,80,.5)"></div>
<div class="t" style="left:695.00px;transform:scaleX(0.812);transform-origin:0 0;top:487.57px;font-size:10.2px;color:#4a4a4a;">Quitter</div>
<svg class="a" style="left:383.5px;top:486.5px" width="10" height="13" viewBox="0 0 10 13">
<path d="M2.2,3.6 Q2.6,1.6 5,1.5 Q7.6,1.5 7.6,3.6 Q7.6,5.3 5.6,6.2 Q4.4,6.8 4.4,8" fill="none" stroke="#c0d0e0" stroke-width="3.6" stroke-linecap="round" opacity=".5"/>
<path d="M2.2,3.6 Q2.6,1.6 5,1.5 Q7.6,1.5 7.6,3.6 Q7.6,5.3 5.6,6.2 Q4.4,6.8 4.4,8" fill="none" stroke="#f6b820" stroke-width="2.8" stroke-linecap="round"/>
<circle cx="4.4" cy="10.4" r="1.6" fill="#f6b820"/>
</svg>
<svg class="a" style="left:480px;top:488px" width="13" height="10"><defs><linearGradient id="env" x1="0" y1="0" x2="1" y2="1"><stop offset="0" stop-color="#60b0f8"/><stop offset="1" stop-color="#e0f8ff"/></linearGradient></defs><rect x=".5" y=".5" width="11" height="8" fill="url(#env)" stroke="#6a6ad8"/><path d="M1.5,1.5 L6,5.5 L10.5,1.5" fill="none" stroke="#70a0e0" stroke-width=".9"/></svg>
<svg class="a" style="left:573px;top:485px" width="15" height="15" viewBox="0 0 15 15">
<circle cx="7.5" cy="7.5" r="5" fill="none" stroke="#f0b010" stroke-width="3.2" stroke-dasharray="2.2 1.4"/>
<circle cx="7.5" cy="7.5" r="4.2" fill="none" stroke="#f0b010" stroke-width="2"/>
<circle cx="7.5" cy="7.5" r="3" fill="#e8e8e8"/>
</svg>
<svg class="a" style="left:665px;top:485.5px" width="16" height="16" viewBox="0 0 16 16">
<path d="M4,4 L12,12 M12,4 L4,12" stroke="#90b0c8" stroke-width="6.4" stroke-linecap="round"/>
<path d="M4,4 L12,12 M12,4 L4,12" stroke="#f8b838" stroke-width="5.2" stroke-linecap="round"/>
</svg>
</body></html>
